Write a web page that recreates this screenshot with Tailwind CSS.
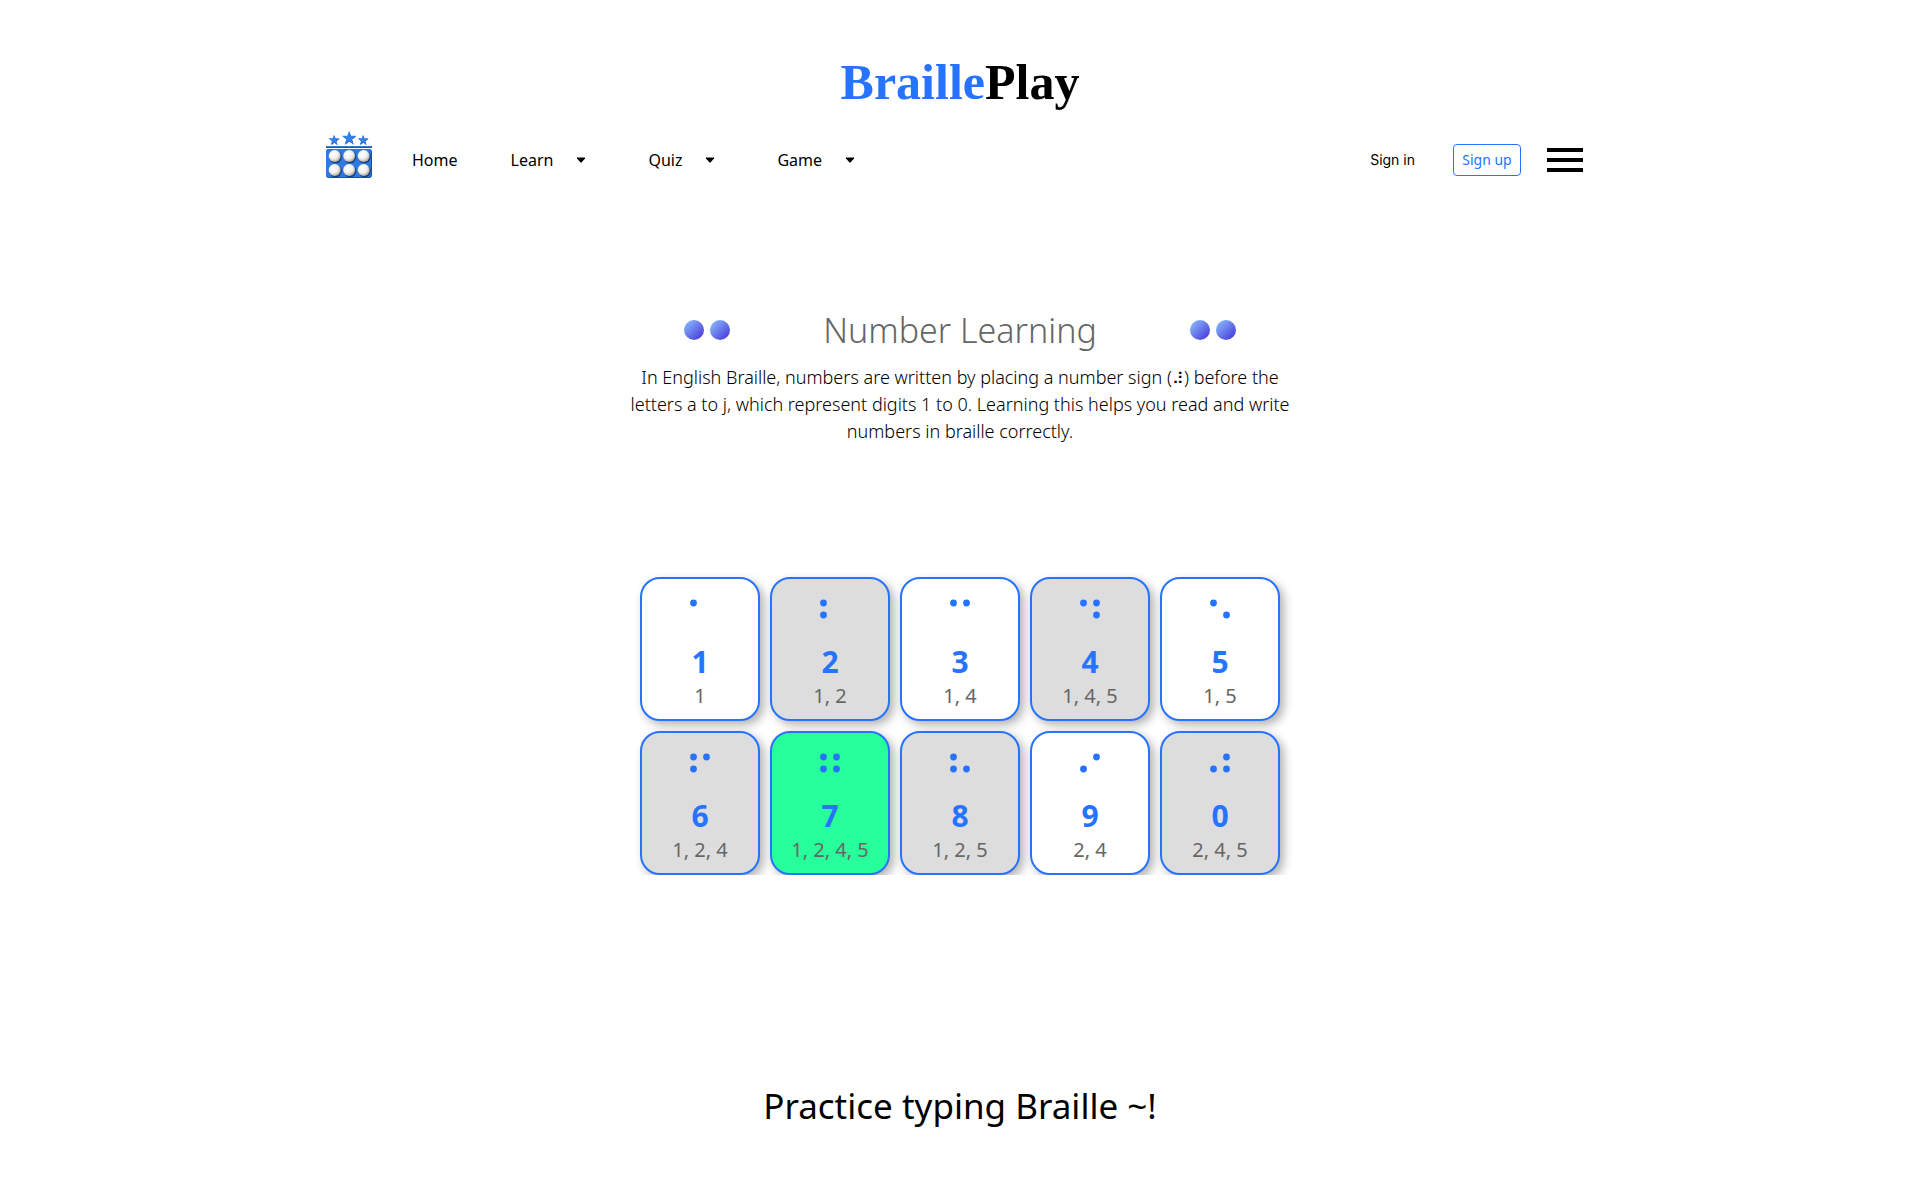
<!DOCTYPE html>
<html lang="en">
<head>
<meta charset="utf-8">
<meta name="viewport" content="width=device-width, initial-scale=1">
<title>BraillePlay</title>
<script src="https://cdn.jsdelivr.net/npm/@tailwindcss/browser@4"></script>
</head>
<body class="bg-white font-['Noto_Sans',sans-serif] text-black">
<header class="mx-auto max-w-7xl pt-12">
  <h1 class="text-center font-['Liberation_Serif',serif] text-[50px] leading-[68px] font-bold"><a href="#"><span class="text-[#2673ff]">Braille</span>Play</a></h1>
  <nav class="flex h-[88px] items-center justify-between pr-[17px] pl-1.5">
    <div class="flex items-center">
      <a href="#" aria-label="BraillePlay home" class="mb-2.5">
        <svg class="h-12 w-[46px]" viewBox="0 0 46 48">
          <defs>
            <radialGradient id="bead" cx=".4" cy=".35" r=".65"><stop offset="0" stop-color="#fff"/><stop offset=".6" stop-color="#f0efed"/><stop offset="1" stop-color="#aaa9a7"/></radialGradient>
            <path id="star" d="M0-7 1.700-2.200 7-2.200 2.700 1 4.300 6.200 0 3-4.300 6.200-2.700 1-7-2.200-1.700-2.200Z"/>
          </defs>
          <g fill="#174a98"><use href="#star" transform="translate(23.400 7.500)"/><use href="#star" transform="translate(8.400 9.500) scale(.75)"/><use href="#star" transform="translate(37.400 9.500) scale(.75)"/></g>
          <g fill="#3482ee"><use href="#star" transform="translate(23 7)"/><use href="#star" transform="translate(8 9) scale(.75)"/><use href="#star" transform="translate(37 9) scale(.75)"/></g>
          <path d="M0 15h46v2H0z" fill="#2a5590"/><path d="M0 15h46v1H0z" fill="#3a7bd6"/>
          <rect y="18" width="46" height="29" rx="3" fill="#1f4f9b"/><rect y="18" width="45" height="28" rx="3" fill="#2f7ae0"/>
          <g fill="#163f80"><circle cx="9.500" cy="26" r="6.300"/><circle cx="24" cy="26" r="6.300"/><circle cx="38.500" cy="26" r="6.300"/><circle cx="9.500" cy="40" r="6.300"/><circle cx="24" cy="40" r="6.300"/><circle cx="38.500" cy="40" r="6.300"/></g>
          <g fill="url(#bead)"><circle cx="8.700" cy="25" r="6"/><circle cx="23.200" cy="25" r="6"/><circle cx="37.700" cy="25" r="6"/><circle cx="8.700" cy="39" r="6"/><circle cx="23.200" cy="39" r="6"/><circle cx="37.700" cy="39" r="6"/></g>
        </svg>
      </a>
      <a href="#" class="ml-10">Home</a>
      <div class="ml-[53px] flex items-center gap-6">
        <a href="#">Learn</a>
        <button type="button" aria-label="Open Learn menu"><svg class="h-1.5 w-2" viewBox="0 0 8 6"><path d="M0 .5h8v1L4.500 5.500h-1L0 1.500Z"/></svg></button>
      </div>
      <div class="ml-[63px] flex items-center gap-6">
        <a href="#">Quiz</a>
        <button type="button" aria-label="Open Quiz menu"><svg class="h-1.5 w-2" viewBox="0 0 8 6"><path d="M0 .5h8v1L4.500 5.500h-1L0 1.500Z"/></svg></button>
      </div>
      <div class="ml-[63px] flex items-center gap-6">
        <a href="#">Game</a>
        <button type="button" aria-label="Open Game menu"><svg class="h-1.5 w-2" viewBox="0 0 8 6"><path d="M0 .5h8v1L4.500 5.500h-1L0 1.500Z"/></svg></button>
      </div>
    </div>
    <div class="flex items-center">
      <button type="button" class="font-['Inter',sans-serif] text-sm">Sign in</button>
      <button type="button" class="ml-[38px] h-8 w-[68px] rounded-sm border border-[#2673ff] text-sm text-[#2673ff]">Sign up</button>
      <button type="button" aria-label="Open menu" class="ml-[26px] flex w-9 flex-col gap-1.5">
        <span class="h-1 w-full bg-black"></span><span class="h-1 w-full bg-black"></span><span class="h-1 w-full bg-black"></span>
      </button>
    </div>
  </nav>
</header>
<main>
  <section class="mx-auto mt-[102px] max-w-[680px] text-center">
    <div class="flex items-center justify-between px-16">
      <div class="flex gap-1.5"><span class="size-5 rounded-full bg-[linear-gradient(135deg,#8ec5ff,#432dd7)]"></span><span class="size-5 rounded-full bg-[linear-gradient(135deg,#8ec5ff,#432dd7)]"></span></div>
      <h2 class="text-[34px] leading-[48px] font-light text-[#666]">Number Learning</h2>
      <div class="flex gap-1.5"><span class="size-5 rounded-full bg-[linear-gradient(135deg,#8ec5ff,#432dd7)]"></span><span class="size-5 rounded-full bg-[linear-gradient(135deg,#8ec5ff,#432dd7)]"></span></div>
    </div>
    <p class="mt-[10px] px-2 text-lg leading-[27px] font-light">In English Braille, numbers are written by placing a number sign (<span class="text-base">⠼</span>) before the letters a to j, which represent digits 1 to 0. Learning this helps you read and write numbers in braille correctly.</p>
  </section>
  <section aria-label="Braille numbers" class="mx-auto mt-32 max-w-[680px] overflow-hidden px-5 pt-1">
    <ul id="cards" class="grid grid-cols-5 gap-2.5 text-center"></ul>
  </section>
  <h2 class="mt-[204px] pb-16 text-center text-[35px] leading-[54px]">Practice typing Braille ~!</h2>
</main>
<script>
const cards = [
  ['1','1','bg-white'],['2','1, 2','bg-[#ddd]'],['3','1, 4','bg-white'],['4','1, 4, 5','bg-[#ddd]'],['5','1, 5','bg-white'],
  ['6','1, 2, 4','bg-[#ddd]'],['7','1, 2, 4, 5','bg-[#26ff9a]'],['8','1, 2, 5','bg-[#ddd]'],['9','2, 4','bg-white'],['0','2, 4, 5','bg-[#ddd]']
];
// Braille dots are numbered down the left column (1-3), then the right (4-6).
const circle = n => `<circle cx="${n > 3 ? 16.5 : 3.5}" cy="${12 + ((n - 1) % 3) * 12}" r="3.4"/>`;
document.getElementById('cards').innerHTML = cards.map(([digit, dots, bg]) => `
  <li class="flex h-36 flex-col items-center rounded-[20px] border-2 border-[#2673ff] pt-3 shadow-[4px_4px_10px_rgba(0,0,0,0.3)] ${bg}">
    <svg class="h-12 w-5 fill-[#2673ff]" viewBox="0 0 20 48" role="img" aria-label="Braille cell for ${digit}">${dots.split(', ').map(circle).join('')}</svg>
    <strong class="text-[30px] leading-[45px] text-[#2673ff]">${digit}</strong>
    <span class="text-xl leading-6 text-[#666]">${dots}</span>
  </li>`).join('');
</script>
</body>
</html>
